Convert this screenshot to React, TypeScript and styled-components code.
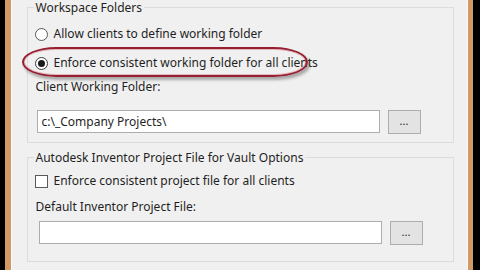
import styled, { createGlobalStyle } from 'styled-components';

const GlobalStyle = createGlobalStyle`
  html, body {
    margin: 0;
    padding: 0;
    background: #000;
  }
  body {
    font-family: "Noto Sans", "Open Sans", sans-serif;
    font-size: 12px;
    color: #1f1f1f;
  }
`;

const Screen = styled.div`
  display: flex;
  width: 480px;
  height: 270px;
  overflow: hidden;
  background: #000;
`;

const Frame = styled.div<{ $side: 'left' | 'right' }>`
  width: 8px;
  margin: ${(p) => (p.$side === 'left' ? '0 0 0 5px' : '0 7px 0 0')};
  background: #d09a66;
`;

const Dialog = styled.div`
  position: relative;
  flex: 1;
  padding: 0 13px 0 15px;
  background: #f0f0f0;
  border-left: 1px solid #fbfbfb;
  border-right: 1px solid #fbfbfb;
`;

const Group = styled.fieldset<{ $bottom: number }>`
  margin: 0;
  padding: 0 30px ${(p) => p.$bottom}px 6px;
  min-width: 0;
  border: 1px solid #dcdcdc;
  display: flex;
  flex-direction: column;

  & + & {
    margin-top: 7px;
  }
`;

const Legend = styled.legend`
  padding: 0 2px;
  margin-left: 0;
  line-height: 15px;
  margin-top: -1px;
`;

const OptionRow = styled.label<{ $top: number }>`
  display: flex;
  align-items: center;
  gap: 6px;
  height: 16px;
  margin-top: ${(p) => p.$top}px;
  padding-left: 1px;
  line-height: 16px;
`;

const Radio = styled.span<{ $checked?: boolean }>`
  box-sizing: border-box;
  width: 13px;
  height: 13px;
  border-radius: 50%;
  border: 1px solid ${(p) => (p.$checked ? '#3c3c3c' : '#5a5a5a')};
  background: #fff;
  display: flex;
  align-items: center;
  justify-content: center;

  &::after {
    content: '';
    display: ${(p) => (p.$checked ? 'block' : 'none')};
    width: 7px;
    height: 7px;
    border-radius: 50%;
    background: #1a1a1a;
  }
`;

const Check = styled.span`
  box-sizing: border-box;
  width: 13px;
  height: 13px;
  border: 1px solid #5a5a5a;
  background: #fff;
`;

const FieldLabel = styled.div<{ $top: number }>`
  margin-top: ${(p) => p.$top}px;
  padding-left: 2px;
  line-height: 16px;
`;

const PathRow = styled.div<{ $top: number; $indent: number }>`
  display: flex;
  gap: 8px;
  margin-top: ${(p) => p.$top}px;
  padding-left: ${(p) => p.$indent}px;
`;

const PathInput = styled.div`
  box-sizing: border-box;
  width: 343px;
  height: 23px;
  padding: 0 4px;
  border: 1px solid #abadb3;
  background: #fff;
  line-height: 21px;
`;

const BrowseButton = styled.div`
  box-sizing: border-box;
  width: 33px;
  height: 24px;
  border: 1px solid #adadad;
  background: #e3e3e3;
  display: flex;
  align-items: center;
  justify-content: center;
  font-size: 11px;
  padding-bottom: 3px;
`;

const Highlight = styled.div`
  position: absolute;
  left: 10px;
  top: 47px;
  width: 286px;
  height: 30px;
  box-sizing: border-box;
  border: 2px solid #962032;
  border-radius: 34px / 15px;
  box-shadow: 2px 3px 3px rgba(0, 0, 0, 0.3), inset 0 0 0 1px rgba(214, 110, 125, 0.45);
  pointer-events: none;
`;

export default function App() {
  return (
    <>
      <GlobalStyle />
      <Screen>
        <Frame $side="left" />
        <Dialog>
          <Group $bottom={8}>
            <Legend>Workspace Folders</Legend>
            <OptionRow $top={11}>
              <Radio />
              Allow clients to define working folder
            </OptionRow>
            <OptionRow $top={13}>
              <Radio $checked />
              Enforce consistent working folder for all clients
            </OptionRow>
            <FieldLabel $top={8}>Client Working Folder:</FieldLabel>
            <PathRow $top={15} $indent={3}>
              <PathInput>c:\_Company Projects\</PathInput>
              <BrowseButton>...</BrowseButton>
            </PathRow>
          </Group>
          <Group $bottom={16}>
            <Legend>Autodesk Inventor Project File for Vault Options</Legend>
            <OptionRow $top={8}>
              <Check />
              Enforce consistent project file for all clients
            </OptionRow>
            <FieldLabel $top={10}>Default Inventor Project File:</FieldLabel>
            <PathRow $top={6} $indent={5}>
              <PathInput />
              <BrowseButton>...</BrowseButton>
            </PathRow>
          </Group>
          <Highlight />
        </Dialog>
        <Frame $side="right" />
      </Screen>
    </>
  );
}
